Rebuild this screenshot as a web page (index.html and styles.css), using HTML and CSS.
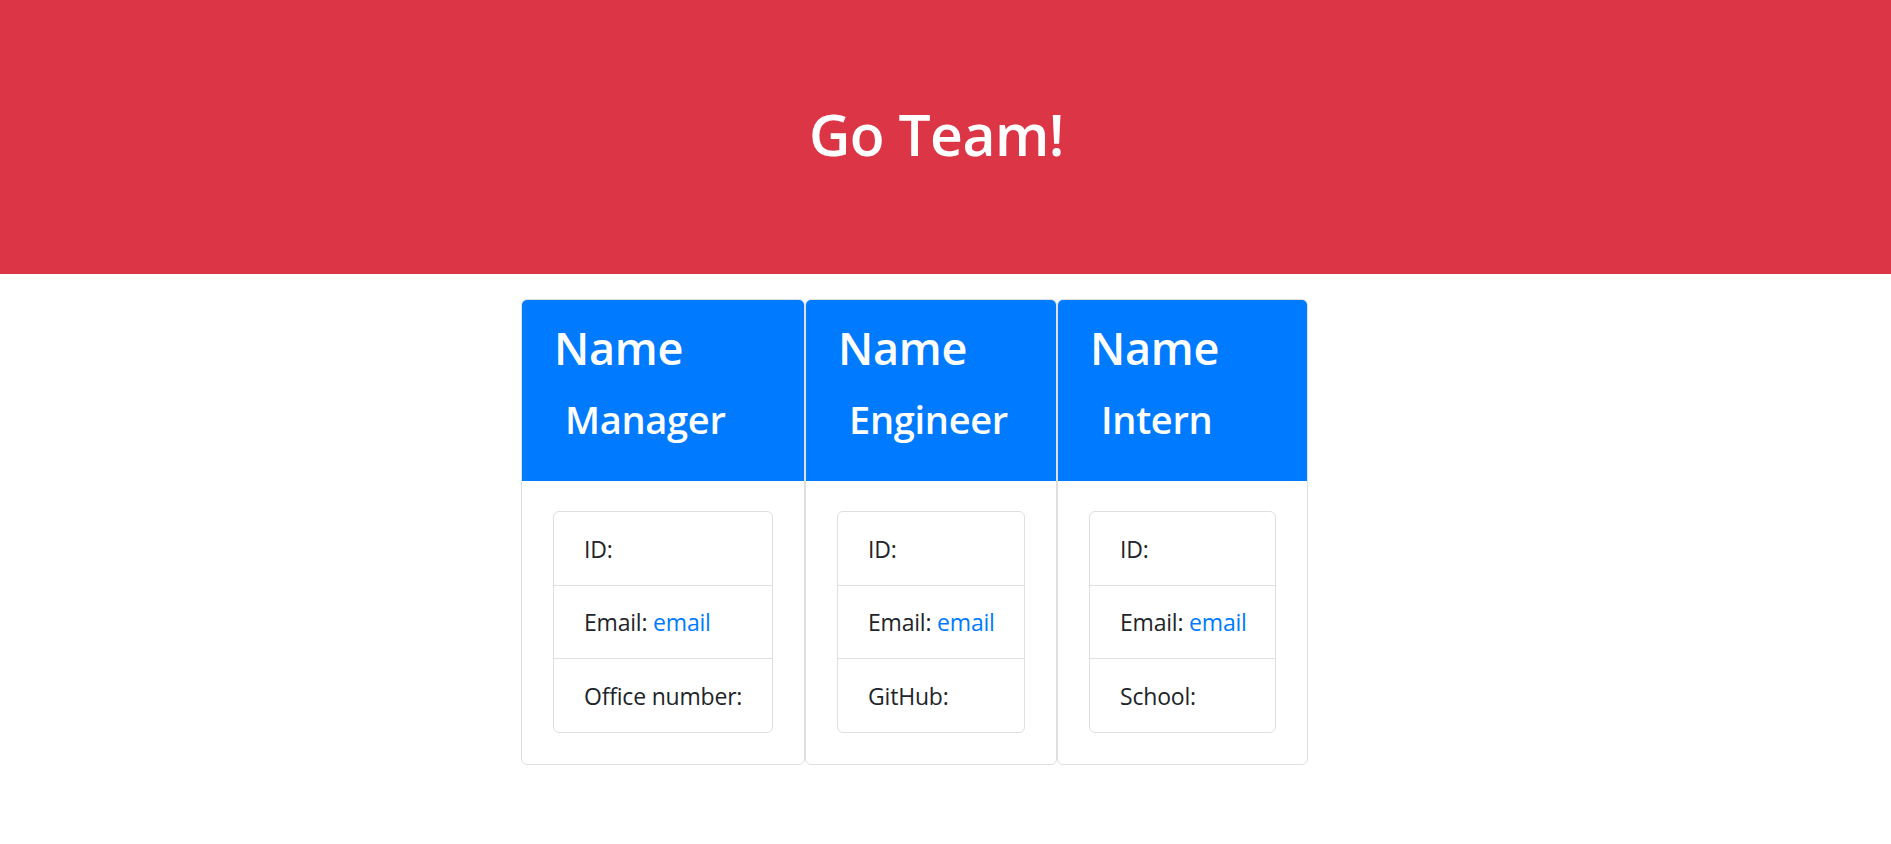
FILE: index.html
```html
<!DOCTYPE html>
<html lang="en">
<head>
<meta charset="utf-8">
<title>Go Team!</title>
<link rel="stylesheet" href="styles.css">
</head>
<body>
<header class="jumbotron">
  <h1 class="title">Go Team!</h1>
</header>
<main class="cards">
  <section class="card card-manager">
    <div class="card-header">
      <h2 class="card-name">Name</h2>
      <h3 class="card-role">Manager</h3>
    </div>
    <div class="card-body">
      <ul class="list">
        <li class="list-item">ID:</li>
        <li class="list-item">Email: <a class="link" href="#">email</a></li>
        <li class="list-item">Office number:</li>
      </ul>
    </div>
  </section>
  <section class="card card-engineer">
    <div class="card-header">
      <h2 class="card-name">Name</h2>
      <h3 class="card-role">Engineer</h3>
    </div>
    <div class="card-body">
      <ul class="list">
        <li class="list-item">ID:</li>
        <li class="list-item">Email: <a class="link" href="#">email</a></li>
        <li class="list-item">GitHub:</li>
      </ul>
    </div>
  </section>
  <section class="card card-intern">
    <div class="card-header">
      <h2 class="card-name">Name</h2>
      <h3 class="card-role">Intern</h3>
    </div>
    <div class="card-body">
      <ul class="list">
        <li class="list-item">ID:</li>
        <li class="list-item">Email: <a class="link" href="#">email</a></li>
        <li class="list-item">School:</li>
      </ul>
    </div>
  </section>
</main>
</body>
</html>
```

FILE: styles.css
```css
* { box-sizing: border-box; }
html, body { margin: 0; padding: 0; }
body {
  font-family: "Open Sans", "Noto Sans", "Liberation Sans", sans-serif;
  color: #212529;
  background: #ffffff;
}
.jumbotron {
  background: #dc3545;
  height: 274px;
  padding-top: 98px;
  padding-right: 18px;
  display: flex;
  justify-content: center;
  align-items: flex-start;
}
.title {
  margin: 0;
  color: #ffffff;
  font-size: 57px;
  line-height: 72px;
  font-weight: 600;
  letter-spacing: -0.5px;
}
.cards {
  display: flex;
  align-items: flex-start;
  margin-top: 25px;
  padding-left: 521px;
}
.card {
  border: 1px solid #dfdfdf;
  border-radius: 6px;
  overflow: hidden;
  background: #fff;
}
.card-manager { width: 284px; }
.card-engineer { width: 252px; }
.card-intern { width: 251px; }
.card-header {
  background: #007bff;
  color: #fff;
  padding: 19px 20px 37px 32px;
  height: 181px;
}
.card-name {
  margin: 0 0 18px 0;
  font-size: 45px;
  line-height: 58px;
  font-weight: 600;
  letter-spacing: -0.3px;
  white-space: nowrap;
}
.card-role {
  margin: 0;
  padding-left: 11px;
  font-size: 38px;
  line-height: 48px;
  font-weight: 600;
  letter-spacing: -0.3px;
  white-space: nowrap;
}
.card-body {
  padding: 30px 31px 31px 31px;
}
.list {
  list-style: none;
  margin: 0;
  padding: 0;
  border: 1px solid #dfdfdf;
  border-radius: 6px;
}
.list-item {
  padding: 18.5px 0 18px 30px;
  font-size: 23px;
  line-height: 36px;
  white-space: nowrap;
  letter-spacing: -0.2px;
}
.list-item + .list-item {
  border-top: 1px solid #dfdfdf;
}
.link {
  color: #007bff;
  text-decoration: none;
}
```
